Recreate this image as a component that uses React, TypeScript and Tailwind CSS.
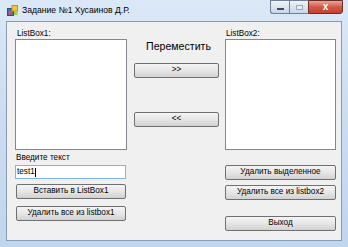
import React from "react";

const font = { fontFamily: '"Liberation Sans", Arial, sans-serif' };

function WinButton({ label, className = "" }: { label: string; className?: string }) {
  return (
    <button
      className={`h-[15px] w-full flex items-center justify-center rounded-[2px] border border-[#707070] bg-gradient-to-b from-[#f4f4f4] via-[#e6e6e6] to-[#d2d2d2] text-[8.2px] leading-none text-black ${className}`}
    >
      {label}
    </button>
  );
}

function AppIcon() {
  return (
    <svg width="11" height="11" viewBox="0 0 11 11">
      <rect x="0.5" y="3.5" width="6" height="7" fill="#3a6fc4" stroke="#27508f" />
      <rect x="1.5" y="6" width="4" height="3.5" fill="#e94b3c" />
      <rect x="5" y="0.5" width="5.5" height="5.5" fill="#f6c531" stroke="#c8901a" />
      <rect x="7" y="6.5" width="3.5" height="3.5" fill="#8fd05a" />
    </svg>
  );
}

export default function App() {
  return (
    <div
      className="w-[348px] h-[247px] overflow-hidden bg-gradient-to-b from-[#dbe8f7] via-[#cadcf1] to-[#c0d5ee] flex flex-col"
      style={font}
    >
      {/* TITLE BAR */}
      <div className="h-[21px] flex items-start">
        <div className="flex items-center gap-[4px] pl-[7px] pt-[5px]">
          <AppIcon />
          <span className="text-[8.6px] leading-none text-black">Задание №1 Хусаинов Д.Р.</span>
        </div>
        <div className="ml-auto mr-[5px] flex h-[14px]">
          <div className="w-[19px] h-full border border-[#6e7f96] border-r-0 rounded-bl-[3px] bg-gradient-to-b from-[#eef3fa] to-[#c9d6e8] flex items-end justify-center pb-[3px]">
            <div className="w-[7px] h-[2px] bg-white border border-[#3c4a5e]" />
          </div>
          <div className="w-[19px] h-full border border-[#6e7f96] border-r-0 bg-gradient-to-b from-[#eef3fa] to-[#c9d6e8] flex items-center justify-center">
            <div className="w-[7px] h-[5px] border border-[#9aa7b8] bg-[#e6edf6]" />
          </div>
          <div className="w-[35px] h-full border border-[#6b2c26] rounded-br-[3px] bg-gradient-to-b from-[#e6a49a] via-[#d2574a] to-[#c7402f] flex items-center justify-center">
            <span className="text-white text-[10px] font-bold leading-none">x</span>
          </div>
        </div>
      </div>

      {/* CLIENT AREA */}
      <div className="mx-[6px] mb-[6px] flex-1 border border-[#8a9bb0] bg-[#f0f0f0] flex pl-[8px] pr-[3px]">
        {/* left */}
        <div className="w-[112px] flex flex-col">
          <div className="mt-[6px] h-[11px] text-[8.2px] leading-[11px] pl-[2px]">ListBox1:</div>
          <div className="h-[111px] border border-[#828790] bg-white" />
          <div className="mt-[2px] h-[11px] text-[8.2px] leading-[11px] pl-[1px]">Введите текст</div>
          <div className="mt-[2px] h-[14px] w-[111px] border border-[#7eb4ea] bg-white flex items-center pl-[1px] text-[8.2px] leading-none">
            test1<span className="w-px h-[9px] bg-black" />
          </div>
          <div className="px-[1px] mt-[5px]">
            <WinButton label="Вставить в ListBox1" />
          </div>
          <div className="px-[1px] mt-[7px]">
            <WinButton label="Удалить все из listbox1" />
          </div>
        </div>

        {/* middle */}
        <div className="ml-[7px] w-[85px] flex flex-col">
          <div className="mt-[18px] h-[12px] text-[10.6px] leading-[12px] text-center pl-[4px]">Переместить</div>
          <div className="mt-[11px]">
            <WinButton label=">>" />
          </div>
          <div className="mt-[34px]">
            <WinButton label="<<" />
          </div>
        </div>

        {/* right */}
        <div className="ml-[6px] w-[111px] flex flex-col">
          <div className="mt-[6px] h-[11px] text-[8.2px] leading-[11px] pl-[1px]">ListBox2:</div>
          <div className="h-[111px] border border-[#828790] bg-white" />
          <div className="mt-[15px]">
            <WinButton label="Удалить выделенное" />
          </div>
          <div className="mt-[5px]">
            <WinButton label="Удалить все из listbox2" />
          </div>
          <div className="mt-[16px]">
            <WinButton label="Выход" />
          </div>
        </div>
      </div>
    </div>
  );
}
